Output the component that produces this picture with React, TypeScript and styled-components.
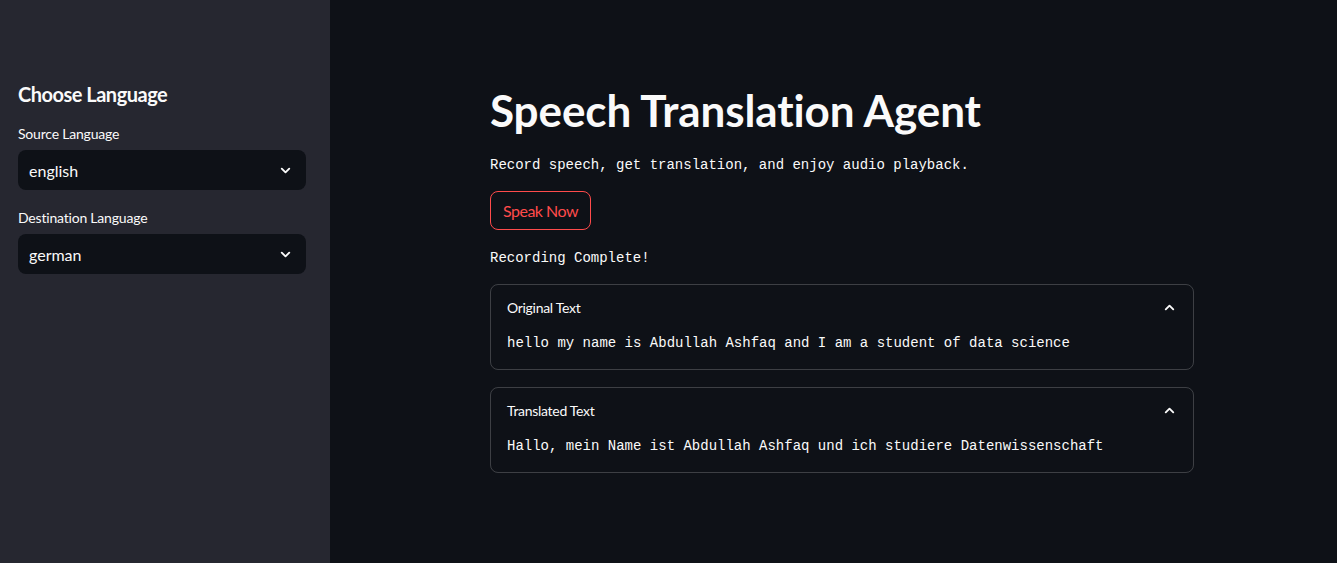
import React from 'react';
import styled, { createGlobalStyle } from 'styled-components';

const GlobalStyle = createGlobalStyle`
  html, body {
    margin: 0;
    padding: 0;
    background: #0e1117;
  }
  * {
    box-sizing: border-box;
  }
`;

const Shell = styled.div`
  display: flex;
  width: 100%;
  min-height: 563px;
  background: #0e1117;
  color: #fafafa;
  font-family: Lato, "Liberation Sans", sans-serif;
`;

const Sidebar = styled.aside`
  width: 330px;
  flex-shrink: 0;
  background: #262730;
  padding: 81px 24px 0 18px;
  display: flex;
  flex-direction: column;
`;

const SidebarTitle = styled.h2`
  margin: 0 0 18px 0;
  font-size: 20px;
  font-weight: 700;
  line-height: 26px;
  letter-spacing: -0.5px;
`;

const Field = styled.div`
  display: flex;
  flex-direction: column;
  gap: 7px;
  margin-bottom: 19px;
`;

const FieldLabel = styled.label`
  font-size: 14px;
  line-height: 18px;
  letter-spacing: -0.2px;
`;

const SelectBox = styled.div`
  height: 40px;
  background: #0e1117;
  border-radius: 8px;
  display: flex;
  align-items: center;
  justify-content: space-between;
  padding: 0 13px 0 11px;
  font-size: 16px;
`;

const Main = styled.main`
  flex: 1;
  padding: 84px 0 0 160px;
`;

const Content = styled.div`
  width: 704px;
  display: flex;
  flex-direction: column;
`;

const Title = styled.h1`
  margin: 0;
  font-size: 44px;
  font-weight: 700;
  line-height: 52px;
  letter-spacing: -0.1px;
`;

const Mono = styled.p`
  margin: 0;
  font-family: "Liberation Mono", "DejaVu Sans Mono", monospace;
  font-size: 14px;
  line-height: 20px;
`;

const Subtitle = styled(Mono)`
  margin-top: 19px;
`;

const SpeakButton = styled.button`
  align-self: flex-start;
  margin-top: 16px;
  height: 39px;
  padding: 0 12px;
  background: transparent;
  border: 1px solid #ff4b4b;
  border-radius: 8px;
  color: #ff4b4b;
  font-family: Lato, "Liberation Sans", sans-serif;
  font-size: 16px;
  letter-spacing: -0.5px;
`;

const Status = styled(Mono)`
  margin-top: 18px;
`;

const Expander = styled.section<{ first?: boolean }>`
  margin-top: ${p => (p.first ? '16px' : '17px')};
  border: 1px solid rgba(250, 250, 250, 0.2);
  border-radius: 8px;
  padding: 12px 16px 16px 16px;
`;

const ExpanderHeader = styled.div`
  display: flex;
  justify-content: space-between;
  align-items: center;
  height: 20px;
  font-size: 14px;
  letter-spacing: -0.3px;
`;

const Chevron = ({ up }: { up?: boolean }) => (
  <svg width="15" height="15" viewBox="0 0 24 24" fill="none">
    <path
      d={up ? 'M6 15l6-6 6 6' : 'M6 9l6 6 6-6'}
      stroke="#fafafa"
      strokeWidth="3"
      strokeLinecap="round"
      strokeLinejoin="round"
    />
  </svg>
);

const ExpanderText = styled(Mono)`
  margin-top: 16px;
`;

const App: React.FC = () => {
  return (
    <>
      <GlobalStyle />
      <Shell>
        <Sidebar>
          <SidebarTitle>Choose Language</SidebarTitle>
          <Field>
            <FieldLabel>Source Language</FieldLabel>
            <SelectBox>
              <span>english</span>
              <Chevron />
            </SelectBox>
          </Field>
          <Field>
            <FieldLabel>Destination Language</FieldLabel>
            <SelectBox>
              <span>german</span>
              <Chevron />
            </SelectBox>
          </Field>
        </Sidebar>
        <Main>
          <Content>
            <Title>Speech Translation Agent</Title>
            <Subtitle>Record speech, get translation, and enjoy audio playback.</Subtitle>
            <SpeakButton>Speak Now</SpeakButton>
            <Status>Recording Complete!</Status>
            <Expander first>
              <ExpanderHeader>
                <span>Original Text</span>
                <Chevron up />
              </ExpanderHeader>
              <ExpanderText>hello my name is Abdullah Ashfaq and I am a student of data science</ExpanderText>
            </Expander>
            <Expander>
              <ExpanderHeader>
                <span>Translated Text</span>
                <Chevron up />
              </ExpanderHeader>
              <ExpanderText>Hallo, mein Name ist Abdullah Ashfaq und ich studiere Datenwissenschaft</ExpanderText>
            </Expander>
          </Content>
        </Main>
      </Shell>
    </>
  );
};

export default App;
